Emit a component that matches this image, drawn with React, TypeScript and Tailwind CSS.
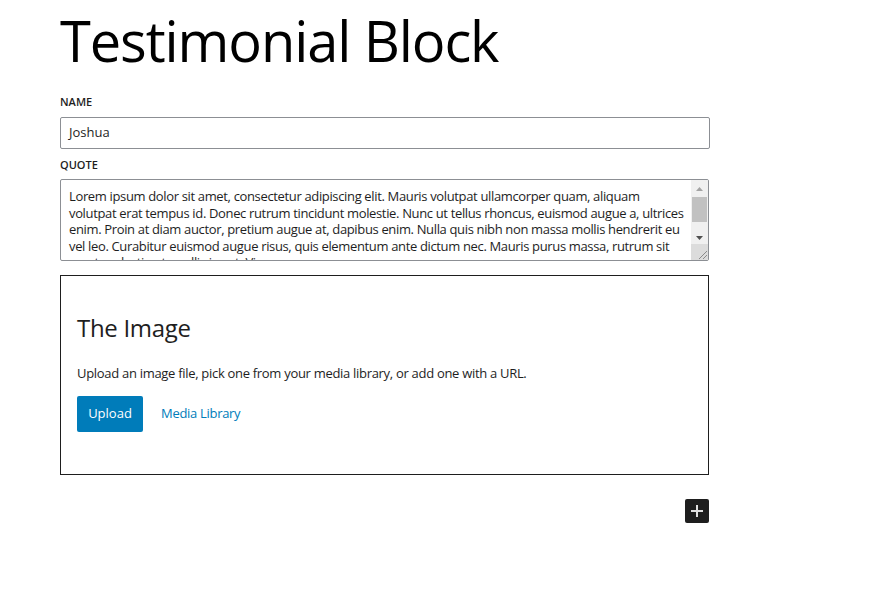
export default function App() {
  const quoteLines = [
    "Lorem ipsum dolor sit amet, consectetur adipiscing elit. Mauris volutpat ullamcorper quam, aliquam",
    "volutpat erat tempus id. Donec rutrum tincidunt molestie. Nunc ut tellus rhoncus, euismod augue a, ultrices",
    "enim. Proin at diam auctor, pretium augue at, dapibus enim. Nulla quis nibh non massa mollis hendrerit eu",
    "vel leo. Curabitur euismod augue risus, quis elementum ante dictum nec. Mauris purus massa, rutrum sit",
    "amet molestie ut, mollis in est. Vivamus",
  ];

  return (
    <div
      className="min-h-[608px] bg-white text-[#1e1e1e]"
      style={{ fontFamily: '"Open Sans", "Noto Sans", sans-serif' }}
    >
      <div className="ml-[60px] w-[650px]">
        <h1 className="m-0 pt-[6px] text-[56px] leading-[68px] font-normal tracking-[-1.1px] text-black">
          Testimonial Block
        </h1>

        <label className="mt-[21px] block text-[11px] leading-[14px] font-semibold uppercase text-[#1e1e1e]">
          Name
        </label>
        <div className="mt-[8px] flex h-[32px] w-[650px] items-center rounded-[2px] border border-[#8c8f94] px-[8px] text-[13px] text-[#1e1e1e]">
          Joshua
        </div>

        <label className="mt-[9px] block text-[11px] leading-[14px] font-semibold uppercase text-[#1e1e1e]">
          Quote
        </label>
        <div className="mt-[7px] flex h-[82px] w-[649px] overflow-hidden rounded-[2px] border border-[#8c8f94]">
          <div className="flex-1 overflow-hidden pl-[8px] pt-[8px] text-[13px] leading-[16.6px] tracking-[-0.35px] text-[#1e1e1e]">
            {quoteLines.map((l, i) => (
              <div key={i} className="whitespace-nowrap">
                {l}
              </div>
            ))}
          </div>
          <div className="flex w-[17px] flex-col bg-[#f0f0f0]">
            <div className="flex h-[17px] items-center justify-center">
              <svg width="7" height="4" viewBox="0 0 7 4">
                <path d="M0 4 L3.5 0 L7 4 Z" fill="#a3a3a3" />
              </svg>
            </div>
            <div className="mx-[1px] h-[25px] bg-[#c1c1c1]" />
            <div className="flex h-[22px] items-end justify-center pb-[4px]">
              <svg width="7" height="4" viewBox="0 0 7 4">
                <path d="M0 0 L7 0 L3.5 4 Z" fill="#505050" />
              </svg>
            </div>
            <div className="relative flex-1 bg-[#dcdcdc]">
              <svg
                className="absolute right-[1px] bottom-[1px]"
                width="9"
                height="9"
                viewBox="0 0 9 9"
              >
                <path d="M1 9 L9 1 M5 9 L9 5" stroke="#8a8a8a" strokeWidth="1" />
              </svg>
            </div>
          </div>
        </div>

        <div className="mt-[14px] h-[200px] w-[649px] border border-[#1e1e1e] px-[16px] pt-[36px]">
          <h2 className="m-0 text-[24px] leading-[32px] font-normal tracking-[-0.3px] text-[#1e1e1e]">
            The Image
          </h2>
          <p className="mt-[20px] text-[13px] leading-[18px] tracking-[-0.3px] text-[#1e1e1e]">
            Upload an image file, pick one from your media library, or add one with a URL.
          </p>
          <div className="mt-[14px] flex items-center">
            <button className="h-[36px] w-[66px] rounded-[2px] bg-[#007cba] text-[13px] text-white">
              Upload
            </button>
            <span className="ml-[18px] text-[13px] tracking-[-0.3px] text-[#007cba]">
              Media Library
            </span>
          </div>
        </div>

        <div className="mt-[24px] flex w-[649px] justify-end">
          <button className="flex h-[24px] w-[24px] items-center justify-center rounded-[2px] bg-[#1e1e1e]">
            <svg width="12" height="12" viewBox="0 0 12 12">
              <path d="M6 0 V12 M0 6 H12" stroke="#e0e0e0" strokeWidth="2" />
            </svg>
          </button>
        </div>
      </div>
    </div>
  );
}
